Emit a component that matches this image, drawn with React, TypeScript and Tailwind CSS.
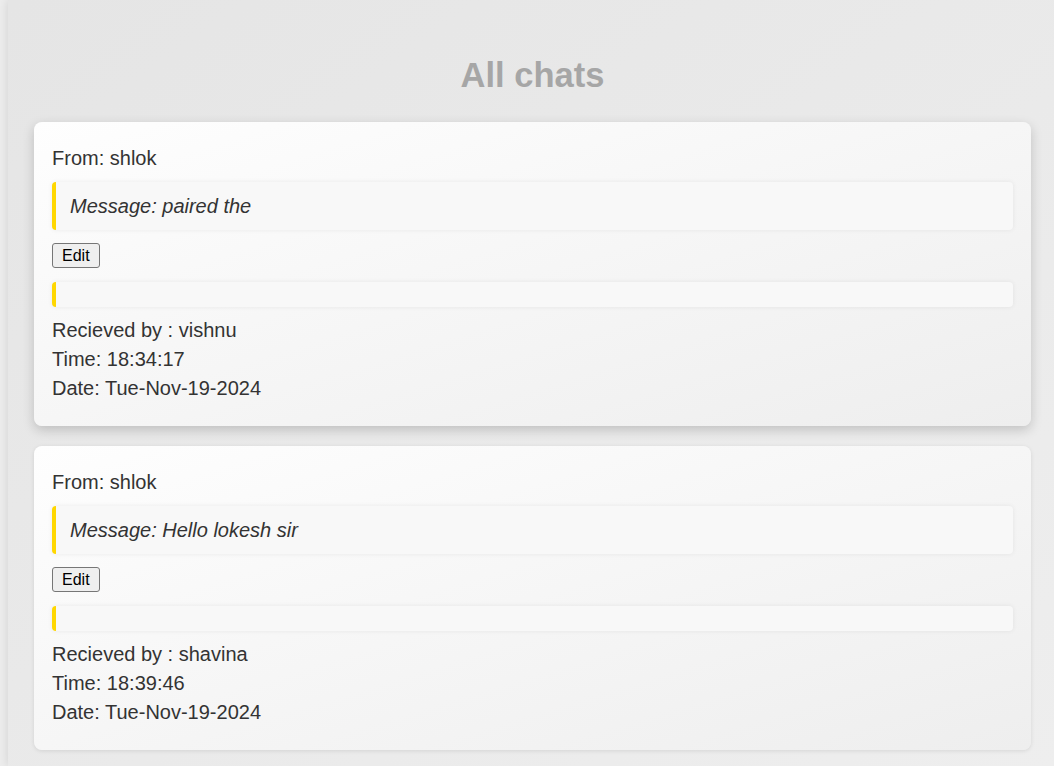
const chats = [
  {
    from: 'shlok',
    message: 'paired the',
    to: 'vishnu',
    time: '18:34:17',
    date: 'Tue-Nov-19-2024',
    active: true,
  },
  {
    from: 'shlok',
    message: 'Hello lokesh sir',
    to: 'shavina',
    time: '18:39:46',
    date: 'Tue-Nov-19-2024',
    active: false,
  },
];

const ChatCard = ({ chat }: { chat: (typeof chats)[number] }) => {
  return (
    <div
      className={`rounded-[8px] bg-gradient-to-br from-[#fefefe] to-[#eeeeee] px-[18px] pt-[22px] pb-[23px] text-[20px] text-[#333333] ${
        chat.active ? 'shadow-[0_4px_12px_rgba(0,0,0,0.18)]' : 'shadow-[0_1px_4px_rgba(0,0,0,0.1)]'
      }`}
    >
      <p className="leading-[29px]">From: {chat.from}</p>
      <div className="mt-[9px] h-[48px] flex items-center rounded-[4px] border-l-[4px] border-[#ffd700] bg-[#f8f8f8] pl-[14px] shadow-[0_0_5px_rgba(0,0,0,0.07)]">
        <em className="leading-[24px]">Message: {chat.message}</em>
      </div>
      <button className="mt-[13px] block rounded-[3px] border border-[#767676] bg-[#efefef] px-[9px] py-[2px] text-[16px] leading-[19px] text-black">
        Edit
      </button>
      <div className="mt-[14px] h-[25px] rounded-[4px] border-l-[4px] border-[#ffd700] bg-[#f8f8f8] shadow-[0_0_5px_rgba(0,0,0,0.07)]" />
      <div className="mt-[9px] leading-[29px]">
        <p>Recieved by : {chat.to}</p>
        <p>Time: {chat.time}</p>
        <p>Date: {chat.date}</p>
      </div>
    </div>
  );
};

const App = () => {
  return (
    <div className="min-h-[766px] overflow-hidden bg-[#ededed] font-['Liberation_Sans',Arial,sans-serif]">
      <div className="ml-[8px] w-[1049px] min-h-[766px] bg-gradient-to-br from-[#e5e5e5] to-[#eeeeee] px-[26px] pt-[56px] pb-[16px] shadow-[0_0_10px_rgba(0,0,0,0.12)]">
        <h1 className="text-center text-[34.5px] font-bold leading-[38px] text-[#a6a6a6]">All chats</h1>
        <div className="mt-[28px] flex flex-col gap-[20px]">
          {chats.map((chat, i) => (
            <ChatCard key={i} chat={chat} />
          ))}
        </div>
      </div>
    </div>
  );
};

export default App;
